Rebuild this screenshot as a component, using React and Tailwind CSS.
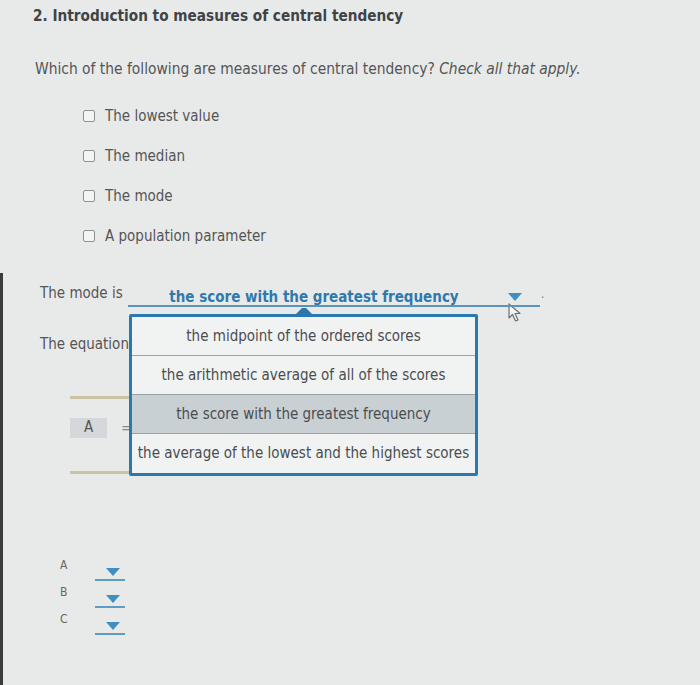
import React from "react";

const options = [
  "The lowest value",
  "The median",
  "The mode",
  "A population parameter",
];

const choices = [
  "the midpoint of the ordered scores",
  "the arithmetic average of all of the scores",
  "the score with the greatest frequency",
  "the average of the lowest and the highest scores",
];

const Caret = ({ className = "" }) => (
  <svg width="14" height="8" viewBox="0 0 14 8" className={className}>
    <path d="M0 0 H14 L7 8 Z" fill="#3f8fc2" />
  </svg>
);

const MiniSelect = ({ label }) => (
  <div className="flex items-end h-[27px]">
    <span className="w-[35px] text-[12px] text-[#666] pb-[7px]">{label}</span>
    <div className="flex flex-col items-center w-[30px] border-b-2 border-[#5f9cc4] pb-[3px] pl-[5px]">
      <Caret />
    </div>
  </div>
);

const App = () => {
  return (
    <div className="w-[700px] min-h-[685px] flex flex-col bg-[#e8eaea] text-[#555] font-['DejaVu_Sans_Condensed','DejaVu_Sans',sans-serif] overflow-hidden">
      {/* Heading */}
      <h1 className="pl-[33px] pt-[5px] text-[15.2px] font-bold text-[#404346] leading-[22px]">
        2. Introduction to measures of central tendency
      </h1>

      <p className="pl-[35px] mt-[31px] text-[15.4px] leading-[22px]">
        Which of the following are measures of central tendency?{" "}
        <i>Check all that apply.</i>
      </p>

      {/* Checklist */}
      <ul className="pl-[83px] mt-[25px] flex flex-col gap-[18px]">
        {options.map((o) => (
          <li key={o} className="flex items-center gap-[10px] h-[22px] text-[15px]">
            <span className="w-[12px] h-[12px] border-[1.5px] border-[#8c9194] rounded-[2px] bg-[#f3f4f4]" />
            {o}
          </li>
        ))}
      </ul>

      {/* Fill-in section */}
      <div className="flex-1 mt-[26px] border-l-[3px] border-[#3a3b3c] pt-[4px] pb-[40px]">
        <div className="flex items-end pl-[37px] h-[32px]">
          <span className="text-[15px] pb-[5px] w-[88px]">The mode is</span>
          <div className="relative w-[412px] mb-[2px] border-b-2 border-[#5a93bd] flex items-end">
            <span className="w-[372px] text-center font-bold text-[15px] leading-[16px] text-[#2f79ad]">
              the score with the greatest frequency
            </span>
            <Caret className="mb-[4px] ml-[8px]" />

            {/* Open dropdown list */}
            <div className="absolute left-[1px] top-full mt-[3px] w-[349px] z-10">
              <div className="flex justify-center h-[6px]">
                <svg width="16" height="6" viewBox="0 0 16 6">
                  <path d="M0 6 L6 0 H10 L16 6 Z" fill="#2a78ad" />
                </svg>
              </div>
              <div className="border-[3px] border-[#2a78ad] bg-[#f1f3f3] rounded-[2px]">
                {choices.map((c, i) => (
                  <div
                    key={c}
                    className={`h-[39px] flex items-center justify-center text-[15px] text-[#4a4d50] ${
                      i < choices.length - 1 ? "border-b border-[#9aa2a6]" : ""
                    } ${i === 2 ? "bg-[#c9d0d3]" : ""}`}
                  >
                    {c}
                  </div>
                ))}
              </div>
            </div>
          </div>
          <span className="ml-[1px] pb-[6px] text-[#777] text-[12px]">.</span>
          {/* pointer */}
          <svg width="18" height="20" viewBox="0 0 18 20" className="-ml-[37px] -mb-[14px]">
            <path d="M2 1 V15 L5.5 11.5 L8.5 18 L11 17 L8 10.5 H13 Z" fill="#f4f6f6" stroke="#6b7175" strokeWidth="1.2" strokeLinejoin="round" />
          </svg>
        </div>

        <p className="pl-[37px] mt-[24px] text-[15px]">The equation</p>

        <div className="pl-[67px] mt-[40px]">
          <div className="w-[160px] h-[3px] bg-[#c9c2a4]" />
          <div className="flex items-center mt-[17px]">
            <span className="w-[37px] h-[20px] bg-[#d4d8da] flex items-center justify-center text-[15px] text-[#555]">
              A
            </span>
            <span className="ml-[14px] text-[#888]">=</span>
          </div>
          <div className="w-[160px] h-[3px] bg-[#c9c2a4] mt-[31px]" />
        </div>

        <div className="pl-[57px] mt-[80px] flex flex-col">
          <MiniSelect label="A" />
          <MiniSelect label="B" />
          <MiniSelect label="C" />
        </div>
      </div>
    </div>
  );
};

export default App;
